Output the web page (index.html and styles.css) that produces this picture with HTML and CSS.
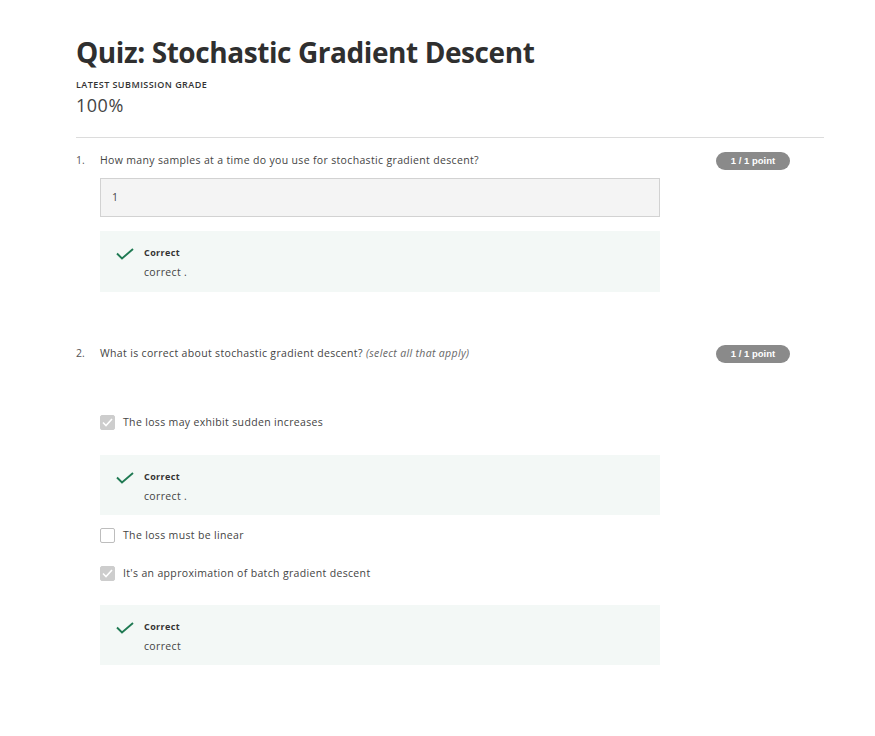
FILE: index.html
```html
<!DOCTYPE html>
<html lang="en">
<head>
<meta charset="utf-8">
<title>Quiz: Stochastic Gradient Descent</title>
<link rel="stylesheet" href="styles.css">
</head>
<body>
<main class="page">
  <header class="head">
    <h1 class="title">Quiz: Stochastic Gradient Descent</h1>
    <div class="grade-label">LATEST SUBMISSION GRADE</div>
    <div class="grade">100%</div>
  </header>

  <section class="question q1">
    <div class="q-num">1.</div>
    <div class="q-body">
      <div class="q-text">How many samples at a time do you use for stochastic gradient descent?</div>
      <div class="answer-box">1</div>
      <div class="feedback">
        <svg class="check" width="18" height="12" viewBox="0 0 18 12"><polyline points="1,5.5 6,10.5 17,1" fill="none" stroke="#1f7a53" stroke-width="1.9"/></svg>
        <div class="fb-text">
          <div class="fb-title">Correct</div>
          <div class="fb-note">correct .</div>
        </div>
      </div>
    </div>
    <div class="badge">1 / 1 point</div>
  </section>

  <section class="question q2">
    <div class="q-num">2.</div>
    <div class="q-body">
      <div class="q-text">What is correct about stochastic gradient descent? <em>(select all that apply)</em></div>
      <div class="options">
        <div class="option has-fb">
          <div class="opt-row">
            <span class="box checked"><svg width="11" height="9" viewBox="0 0 11 9"><polyline points="1,4.5 4,7.5 10,1" fill="none" stroke="#fff" stroke-width="1.6"/></svg></span>
            <span class="opt-label">The loss may exhibit sudden increases</span>
          </div>
          <div class="feedback">
            <svg class="check" width="18" height="12" viewBox="0 0 18 12"><polyline points="1,5.5 6,10.5 17,1" fill="none" stroke="#1f7a53" stroke-width="1.9"/></svg>
            <div class="fb-text">
              <div class="fb-title">Correct</div>
              <div class="fb-note">correct .</div>
            </div>
          </div>
        </div>
        <div class="option">
          <div class="opt-row">
            <span class="box"></span>
            <span class="opt-label">The loss must be linear</span>
          </div>
        </div>
        <div class="option has-fb last">
          <div class="opt-row">
            <span class="box checked"><svg width="11" height="9" viewBox="0 0 11 9"><polyline points="1,4.5 4,7.5 10,1" fill="none" stroke="#fff" stroke-width="1.6"/></svg></span>
            <span class="opt-label">It's an approximation of batch gradient descent</span>
          </div>
          <div class="feedback">
            <svg class="check" width="18" height="12" viewBox="0 0 18 12"><polyline points="1,5.5 6,10.5 17,1" fill="none" stroke="#1f7a53" stroke-width="1.9"/></svg>
            <div class="fb-text">
              <div class="fb-title">Correct</div>
              <div class="fb-note">correct</div>
            </div>
          </div>
        </div>
      </div>
    </div>
    <div class="badge">1 / 1 point</div>
  </section>
</main>
</body>
</html>
```

FILE: styles.css
```css
* { box-sizing: border-box; }

html, body {
  margin: 0;
  padding: 0;
  background: #fff;
}

body {
  font-family: "Open Sans", "Noto Sans", sans-serif;
  color: #3c3c3c;
}

.page {
  width: 875px;
  padding: 32px 51px 0 76px;
}

.head {
  border-bottom: 1px solid #dcdcdc;
  padding-bottom: 20px;
}

.title {
  margin: 0;
  font-size: 28px;
  line-height: 40px;
  font-weight: 700;
  color: #2f2f2f;
  letter-spacing: -0.42px;
}

.grade-label {
  margin-top: 7px;
  font-size: 9px;
  line-height: 12px;
  font-weight: 600;
  color: #333;
  letter-spacing: 0.45px;
}

.grade {
  margin-top: 2px;
  font-size: 18px;
  line-height: 24px;
  font-weight: 400;
  color: #444;
  letter-spacing: 0.5px;
}

.question {
  display: flex;
  align-items: flex-start;
}

.q1 { margin-top: 13px; }
.q2 { margin-top: 52px; }

.q-num {
  width: 24px;
  font-size: 10.5px;
  line-height: 18px;
  color: #555;
}

.q-body {
  width: 560px;
}

.q-text {
  font-size: 10.5px;
  line-height: 18px;
  color: #444;
  letter-spacing: 0.34px;
}

.q-text em {
  color: #666;
}

.badge {
  margin-left: 56px;
  margin-top: 1px;
  width: 74px;
  height: 18px;
  border-radius: 9px;
  background: #8a8a8a;
  color: #fff;
  font-family: "Liberation Sans", Arial, sans-serif;
  font-weight: 700;
  font-size: 9.5px;
  line-height: 18px;
  text-align: center;
}

.answer-box {
  margin-top: 9px;
  height: 39px;
  padding: 9px 11px 10px;
  background: #f4f4f4;
  border: 1px solid #d2d2d2;
  font-size: 10.5px;
  line-height: 18px;
  color: #444;
}

.feedback {
  margin-top: 14px;
  height: 61px;
  background: #f3f8f6;
  padding: 17px 16px 0 16px;
  display: flex;
  align-items: flex-start;
}

.check {
  flex: none;
  margin-right: 10px;
}

.fb-text {
  margin-top: -3px;
}

.fb-title {
  font-size: 9px;
  line-height: 16px;
  font-weight: 700;
  color: #333;
  letter-spacing: 0.4px;
}

.fb-note {
  margin-top: 1.5px;
  font-size: 10.5px;
  line-height: 18px;
  color: #444;
  letter-spacing: 0.34px;
}

.options {
  margin-top: 53px;
}

.option + .option { margin-top: 23px; }
.option.has-fb + .option { margin-top: 13px; }

.option .feedback {
  margin-top: 25px;
  height: 60px;
}

.option.last .feedback {
  margin-top: 24px;
}

.opt-row {
  display: flex;
  align-items: center;
  height: 15px;
}

.box {
  width: 15px;
  height: 15px;
  border: 1px solid #bdbdbd;
  border-radius: 2px;
  background: #fff;
  margin-right: 8px;
  display: flex;
  align-items: center;
  justify-content: center;
}

.box.checked {
  background: #cdcdcd;
  border-color: #cdcdcd;
}

.opt-label {
  font-size: 10.5px;
  line-height: 15px;
  color: #444;
  letter-spacing: 0.34px;
}
```
